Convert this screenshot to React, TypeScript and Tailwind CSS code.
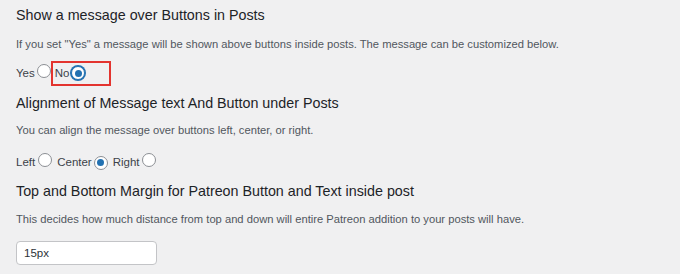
import React from "react";

const font = { fontFamily: "'Liberation Sans', Arial, sans-serif" };

const Radio = ({ checked = false, focused = false }: { checked?: boolean; focused?: boolean }) => (
  <span
    className={`inline-flex h-[14px] w-[14px] shrink-0 items-center justify-center rounded-full border bg-white ${
      focused ? "border-[#2271b1] shadow-[0_0_0_1px_#2271b1]" : "border-[#8c8f94]"
    }`}
  >
    {checked && <span className="h-[7px] w-[7px] rounded-full bg-[#2271b1]" />}
  </span>
);

const Heading = ({ children, className = "" }: { children: React.ReactNode; className?: string }) => (
  <h2 className={`text-[14.3px] leading-[20px] font-normal text-[#1d2327] ${className}`}>{children}</h2>
);

const Desc = ({ children, className = "" }: { children: React.ReactNode; className?: string }) => (
  <p className={`text-[11.2px] leading-[18px] text-[#50575e] ${className}`}>{children}</p>
);

export default function App() {
  return (
    <div className="h-[274px] w-[680px] overflow-hidden bg-[#f0f0f1] px-4 pt-[5px]" style={font}>
      <Heading>Show a message over Buttons in Posts</Heading>
      <Desc className="mt-[10px]">
        If you set "Yes" a message will be shown above buttons inside posts. The message can be customized below.
      </Desc>

      <div className="mt-[8px] flex h-[25px] items-center text-[11.5px] text-[#3c434a]">
        <span>Yes</span>
        <span className="ml-[2px]">
          <Radio />
        </span>
        <span className="flex h-[25px] w-[60px] items-center border-2 border-[#e3342f] pl-[2px]">
          <span>No</span>
          <span className="ml-[2px]">
            <Radio checked focused />
          </span>
        </span>
      </div>

      <Heading className="mt-[7px]">Alignment of Message text And Button under Posts</Heading>
      <Desc className="mt-[8px]">You can align the message over buttons left, center, or right.</Desc>

      <div className="mt-[14px] flex h-[20px] items-center text-[11.5px] text-[#3c434a]">
        <span>Left</span>
        <span className="ml-[3px]">
          <Radio />
        </span>
        <span className="ml-[5px]">Center</span>
        <span className="ml-[2px]">
          <Radio checked />
        </span>
        <span className="ml-[5px]">Right</span>
        <span className="ml-[2px]">
          <Radio />
        </span>
      </div>

      <Heading className="mt-[8px]">Top and Bottom Margin for Patreon Button and Text inside post</Heading>
      <Desc className="mt-[9px]">
        This decides how much distance from top and down will entire Patreon addition to your posts will have.
      </Desc>

      <input
        type="text"
        defaultValue="15px"
        className="mt-[13px] block h-[24px] w-[141px] rounded-[4px] border border-[#c3c4c7] bg-white px-[7px] text-[11.5px] text-[#2c3338] outline-none"
        style={font}
      />
    </div>
  );
}
